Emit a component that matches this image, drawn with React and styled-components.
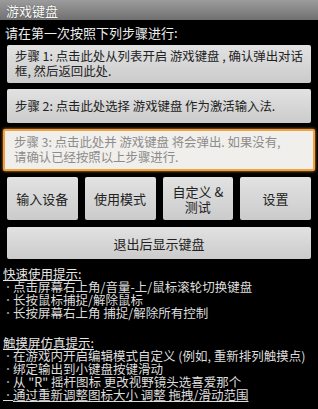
import React from 'react';
import styled, { createGlobalStyle } from 'styled-components';

const GlobalStyle = createGlobalStyle`
  html, body {
    margin: 0;
    padding: 0;
    background: #000;
  }
  body {
    font-family: "Noto Sans CJK SC", "Liberation Sans", sans-serif;
  }
`;

const Screen = styled.div`
  width: 318px;
  height: 409px;
  overflow: hidden;
  background: #000;
  color: #fff;
`;

const TitleBar = styled.div`
  height: 20px;
  padding-left: 6px;
  display: flex;
  align-items: center;
  background: linear-gradient(#9c9c9c, #707070);
  color: #fff;
  font-size: 13px;
  text-shadow: 0 0 1px #333;
`;

const Intro = styled.div`
  padding: 5px 0 0 5px;
  height: 20px;
  font-size: 13px;
  line-height: 16px;
  color: #eee;
`;

const Body = styled.div`
  display: flex;
  flex-direction: column;
  padding: 0 7px;
`;

const StepButton = styled.div`
  box-sizing: border-box;
  min-height: ${({ $h }) => $h}px;
  margin-bottom: 6px;
  padding: 4px 8px;
  display: flex;
  align-items: center;
  font-size: 12.4px;
  line-height: 15px;
  white-space: nowrap;
  color: #222;
  border-radius: 2px;
  background: linear-gradient(#e2e2e2, #cbcbcb);
`;

const FocusButton = styled(StepButton)`
  margin: 0 -4px 6px;
  padding: 4px 9px;
  color: #8c8c8c;
  background: #f1efeb;
  border: 2px solid #f2a040;
  box-shadow: 0 0 3px #f2a040;
`;

const ButtonRow = styled.div`
  display: grid;
  grid-template-columns: repeat(4, 1fr);
  gap: 7px;
  margin-bottom: 7px;
`;

const SmallButton = styled.div`
  height: 43px;
  display: flex;
  align-items: center;
  justify-content: center;
  text-align: center;
  font-size: 13px;
  line-height: 15px;
  color: #222;
  border-radius: 2px;
  background: linear-gradient(#e2e2e2, #cbcbcb);
`;

const WideButton = styled(SmallButton)`
  height: 32px;
`;

const Tips = styled.div`
  padding: 8px 0 0 3px;
  font-size: 12.5px;
  line-height: 13px;
  color: #ddd;
`;

const TipHeader = styled.div`
  text-decoration: underline;
  margin-top: ${({ $gap }) => $gap || 0}px;
  color: #e6e6e6;
`;

const Tip = styled.div`
  display: flex;
  gap: 4px;
  white-space: nowrap;
  text-decoration: ${({ $link }) => ($link ? 'underline' : 'none')};

  &:before {
    content: '•';
    color: #999;
    font-size: 10px;
    width: 6px;
  }
`;

const quickTips = [
  '点击屏幕右上角/音量-上/鼠标滚轮切换键盘',
  '长按鼠标捕捉/解除鼠标',
  '长按屏幕右上角 捕捉/解除所有控制',
];

const touchTips = [
  '在游戏内开启编辑模式自定义 (例如, 重新排列触摸点)',
  '绑定输出到小键盘按键滑动',
  '从 "R" 摇杆图标 更改视野镜头选喜爱那个',
];

export default function App() {
  return (
    <Screen>
      <GlobalStyle />
      <TitleBar>游戏键盘</TitleBar>
      <Intro>请在第一次按照下列步骤进行:</Intro>
      <Body>
        <StepButton $h={38}>
          <span>步骤 1: 点击此处从列表开启 游戏键盘 , 确认弹出对话<br />框, 然后返回此处.</span>
        </StepButton>
        <StepButton $h={34}>步骤 2: 点击此处选择 游戏键盘 作为激活输入法.</StepButton>
        <FocusButton $h={41}>
          <span>步骤 3: 点击此处并 游戏键盘 将会弹出. 如果没有,<br />请确认已经按照以上步骤进行.</span>
        </FocusButton>
        <ButtonRow>
          <SmallButton>输入设备</SmallButton>
          <SmallButton>使用模式</SmallButton>
          <SmallButton>自定义 &amp;<br />测试</SmallButton>
          <SmallButton>设置</SmallButton>
        </ButtonRow>
        <WideButton>退出后显示键盘</WideButton>
      </Body>
      <Tips>
        <TipHeader>快速使用提示:</TipHeader>
        {quickTips.map((t, i) => <Tip key={i}>{t}</Tip>)}
        <TipHeader $gap={17}>触摸屏仿真提示:</TipHeader>
        {touchTips.map((t, i) => <Tip key={i}>{t}</Tip>)}
        <Tip $link>通过重新调整图标大小 调整 拖拽/滑动范围</Tip>
      </Tips>
    </Screen>
  );
}
